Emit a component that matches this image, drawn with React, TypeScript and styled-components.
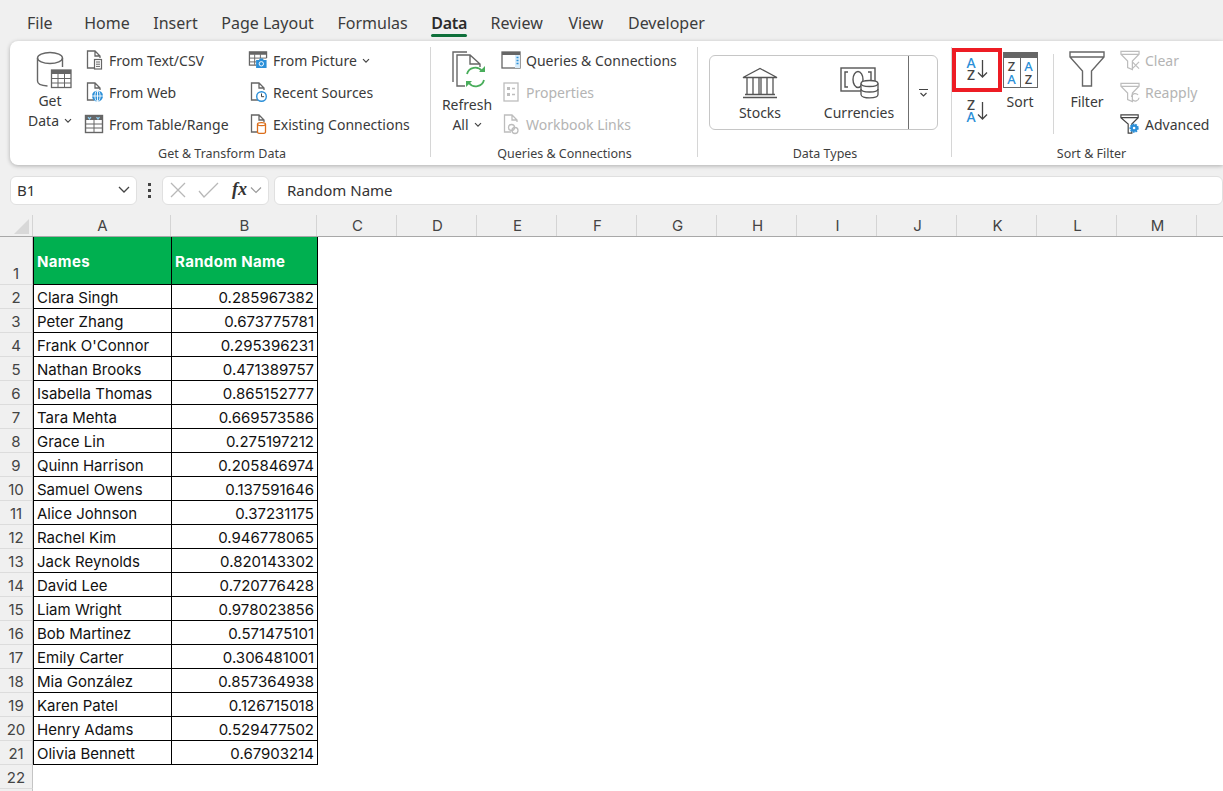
import React from 'react';
import styled, { createGlobalStyle } from 'styled-components';

const GlobalStyle = createGlobalStyle`
    html, body {
        margin: 0;
        padding: 0;
        background: #ffffff;
        overflow: hidden;
    }
    * {
        box-sizing: border-box;
    }
`;

const uiFont = '"Noto Sans", "Open Sans", sans-serif';
const cellFont = 'Inter, "Open Sans", sans-serif';

const GREY = '#666666';
const BLUE = '#2b8fd8';
const OFF = '#bdbdbd';

/* ---------- icons ---------- */

const Chevron = ({ size = 8, color = '#444' }: { size?: number; color?: string }) => (
    <svg width={size} height={size * 0.7} viewBox="0 0 8 5.6" fill="none">
        <path d="M1 1.2 4 4.2 7 1.2" stroke={color} strokeWidth="1.2" />
    </svg>
);

const DocOutline = ({ color = GREY }: { color?: string }) => (
    <path d="M10 19H3.5V2H11L16 7V9M11 2V7H16" stroke={color} strokeWidth="1.3" fill="none" />
);

const TextCsvIcon = () => (
    <svg width="20" height="22" viewBox="0 0 20 22" fill="none">
        <DocOutline />
        <rect x="10.5" y="10.5" width="7" height="9.5" fill="#fff" stroke={GREY} strokeWidth="1.2" />
        <path d="M12 13h4M12 15.2h4M12 17.4h4" stroke={GREY} />
    </svg>
);

const WebIcon = () => (
    <svg width="20" height="22" viewBox="0 0 20 22" fill="none">
        <DocOutline />
        <circle cx="13.5" cy="15" r="5.5" fill={BLUE} />
        <path d="M8 15h11M13.5 9.5v11" stroke="#fff" strokeWidth="0.9" />
        <ellipse cx="13.5" cy="15" rx="2.6" ry="5.5" stroke="#fff" strokeWidth="0.9" />
    </svg>
);

const TableRangeIcon = () => (
    <svg width="20" height="20" viewBox="0 0 20 20" fill="none">
        <rect x="1.5" y="1.5" width="17" height="17" fill="#fff" stroke={GREY} strokeWidth="1.4" />
        <rect x="1.5" y="1.5" width="17" height="4.5" fill={GREY} />
        <path d="M4 3.2 5.5 5 7 3.2M12.5 3.2 14 5 15.5 3.2" fill="none" stroke="#8fd0f5" strokeWidth="1.2" />
        <path d="M1.5 10h17M1.5 14h17M10 6v12.5" stroke={GREY} />
    </svg>
);

const PictureIcon = () => (
    <svg width="21" height="20" viewBox="0 0 21 20" fill="none">
        <path d="M9 15.5H1.5V1.5h18V8" stroke={GREY} strokeWidth="1.3" />
        <rect x="1.5" y="1.5" width="18" height="3" fill={GREY} />
        <path d="M1.5 8h18M1.5 12h7M7 4v11M13 4v4" stroke={GREY} />
        <path d="M8.5 10h3l1-1.5h3l1 1.5h3v8.5h-11z" fill={BLUE} />
        <circle cx="14" cy="14" r="2.3" fill={BLUE} stroke="#fff" strokeWidth="1" />
    </svg>
);

const RecentIcon = () => (
    <svg width="20" height="22" viewBox="0 0 20 22" fill="none">
        <DocOutline />
        <circle cx="13.5" cy="15.5" r="4.8" fill="#fff" stroke={BLUE} strokeWidth="1.4" />
        <path d="M13.5 12.5v3.2h2.6" stroke="#444" strokeWidth="1" />
    </svg>
);

const ExistingIcon = () => (
    <svg width="20" height="22" viewBox="0 0 20 22" fill="none">
        <DocOutline />
        <path d="M9.5 11.2c0-2.2 8-2.2 8 0v8c0 1.6-8 1.6-8 0z" fill="#fff" stroke="#db6e1b" strokeWidth="1.3" />
        <path d="M9.5 11.5c1 1.6 7 1.6 8 0" stroke="#db6e1b" strokeWidth="1.3" />
    </svg>
);

const GetDataIcon = () => (
    <svg width="36" height="38" viewBox="0 0 36 38" fill="none">
        <ellipse cx="14" cy="7" rx="12.5" ry="5.5" fill="#fff" stroke={GREY} strokeWidth="1.4" />
        <path d="M1.5 7v23c0 2.6 4 4.6 10 5" stroke={GREY} strokeWidth="1.4" />
        <path d="M26.5 7v9" stroke={GREY} strokeWidth="1.4" />
        <rect x="15.5" y="19" width="19.5" height="17.5" fill="#fff" stroke={GREY} strokeWidth="1.3" />
        <rect x="15.5" y="19" width="19.5" height="4" fill={GREY} />
        <path d="M15.5 27.5h19.5M15.5 32h19.5M22 23v13.5M28.5 23v13.5" stroke={GREY} />
    </svg>
);

const QueriesIcon = () => (
    <svg width="20" height="18" viewBox="0 0 20 18" fill="none">
        <rect x="1" y="1" width="18" height="16" fill="#fff" stroke={GREY} strokeWidth="1.3" />
        <rect x="1" y="1" width="18" height="3" fill={GREY} />
        <rect x="14" y="4" width="5" height="13" fill="#d8ecfa" />
        <path d="M15.5 6.5h2M15.5 9.5h2M15.5 12.5h2" stroke={BLUE} strokeWidth="1.4" />
    </svg>
);

const PropertiesIcon = () => (
    <svg width="16" height="20" viewBox="0 0 16 20" fill="none">
        <rect x="1" y="1" width="14" height="18" stroke={OFF} strokeWidth="1.3" />
        <rect x="4" y="5" width="3" height="3" fill={OFF} />
        <rect x="4" y="11" width="3" height="3" fill={OFF} />
        <path d="M9 6.5h3M9 12.5h3" stroke={OFF} strokeWidth="1.3" />
    </svg>
);

const WorkbookLinksIcon = () => (
    <svg width="20" height="22" viewBox="0 0 20 22" fill="none">
        <DocOutline color={OFF} />
        <circle cx="10.5" cy="14.5" r="3" stroke={OFF} strokeWidth="1.3" />
        <circle cx="14" cy="17.5" r="3" stroke={OFF} strokeWidth="1.3" />
    </svg>
);

const RefreshIcon = () => (
    <svg width="35" height="39" viewBox="0 0 35 39" fill="none">
        <path d="M1 31V1h14" stroke={GREY} strokeWidth="1.4" />
        <path d="M13 35H5V4h13l10 9v3M18 4v9h10" stroke={GREY} strokeWidth="1.4" />
        <path d="M15 23a8.5 8.5 0 0 1 15-3M32 29a8.5 8.5 0 0 1-15 3" stroke="#49ad5b" strokeWidth="1.8" />
        <path d="M33 15v6h-6zM14 36v-6h6z" fill="#49ad5b" />
    </svg>
);

const StocksIcon = () => (
    <svg width="36" height="32" viewBox="0 0 36 32" fill="none" stroke="#555" strokeWidth="1.3">
        <path d="M1 10.5 18 1.5l17 9zM1 10.5h34" />
        <path d="M5 11v16M11 11v16M17 11v16M19 11v16M25 11v16M31 11v16" />
        <path d="M3 27.5h30M1 30.5h34" />
    </svg>
);

const CurrenciesIcon = () => (
    <svg width="39" height="33" viewBox="0 0 39 33" fill="none">
        <rect x="1" y="1" width="34" height="23" stroke="#555" strokeWidth="1.4" />
        <path d="M8 5H5v15h3M28 5h3v8" stroke="#555" strokeWidth="1.4" />
        <ellipse cx="18" cy="12.5" rx="5" ry="8" stroke="#555" strokeWidth="1.4" />
        <path d="M21 16.5c0-4 17-4 17 0v11c0 4.5-17 4.5-17 0z" fill="#fff" stroke="#555" strokeWidth="1.3" />
        <path d="M21 16.5c0 4 17 4 17 0M21 22c0 4 17 4 17 0" stroke="#555" strokeWidth="1.3" />
    </svg>
);

const MoreIcon = () => (
    <svg width="11" height="10" viewBox="0 0 11 10" fill="none" stroke="#444">
        <path d="M1 1.5h9" />
        <path d="M2.5 5 5.5 8 8.5 5" strokeWidth="1.2" />
    </svg>
);

/* stacked letters: the first line takes the other colour */
const Letters = styled.span<{ $blueFirst?: boolean; $size: number; $lh: number }>`
    display: block;
    text-align: center;
    font: 500 ${(p) => p.$size}px/${(p) => p.$lh}px ${uiFont};
    color: ${(p) => (p.$blueFirst ? '#444444' : BLUE)};

    &::first-line {
        color: ${(p) => (p.$blueFirst ? BLUE : '#444444')};
    }
`;

const SortGlyph = styled.span`
    display: flex;
    align-items: center;
    gap: 1px;
`;

const DownArrow = () => (
    <svg width="11" height="20" viewBox="0 0 11 20" fill="none" stroke="#444" strokeWidth="1.3">
        <path d="M5.5 1v17M1 13.5 5.5 18 10 13.5" />
    </svg>
);

const SortBox = styled.div`
    width: 35px;
    height: 36px;
    display: flex;
    background: #ffffff;
    border: 1.5px solid ${GREY};
    border-top-width: 6px;
`;

const SortPane = styled.div<{ $line?: boolean }>`
    flex: 1;
    padding-top: 2px;
    border-left: ${(p) => (p.$line ? `1.5px solid ${GREY}` : 'none')};
`;

const FilterIcon = () => (
    <svg width="36" height="36" viewBox="0 0 36 36" fill="none">
        <path d="M1 1h34v5L22.5 20v15h-9V20L1 6zM1 6h34" fill="#fff" stroke={GREY} strokeWidth="1.4" />
    </svg>
);

const FunnelSmall = ({ color }: { color: string }) => (
    <path d="M1 1h19v3l-7 7v9l-5-2v-7L1 4zM1 4h19" fill="#fff" stroke={color} strokeWidth="1.3" />
);

const ClearIcon = () => (
    <svg width="21" height="21" viewBox="0 0 21 21" fill="none">
        <FunnelSmall color={OFF} />
        <path d="M13 12l7 7M20 12l-7 7" stroke={OFF} strokeWidth="1.3" />
    </svg>
);

const ReapplyIcon = () => (
    <svg width="21" height="21" viewBox="0 0 21 21" fill="none">
        <FunnelSmall color={OFF} />
        <path d="M12 15a4 4 0 0 1 7-2M20 16a4 4 0 0 1-7 2" stroke={OFF} strokeWidth="1.3" />
    </svg>
);

const AdvancedIcon = () => (
    <svg width="22" height="22" viewBox="0 0 22 22" fill="none">
        <path d="M1 1h19v3l-7 7v10h-4V11L1 4zM1 4h19" fill="#fff" stroke="#444" strokeWidth="1.3" />
        <circle cx="15.5" cy="15.5" r="4" fill={BLUE} stroke={BLUE} strokeDasharray="1.8 1" strokeWidth="2.2" />
        <circle cx="15.5" cy="15.5" r="1.4" fill="#fff" />
    </svg>
);

/* ---------- ribbon ---------- */

const Page = styled.div`
    width: 1223px;
    height: 791px;
    overflow: hidden;
    background: #ffffff;
`;

const Chrome = styled.div`
    background: #f0f0f0;
    height: 215px;
    font-family: ${uiFont};
`;

const TabBar = styled.nav`
    height: 41px;
    display: flex;
    align-items: flex-start;
    padding: 12px 0 0 27px;
    gap: 23.6px;
`;

const Tab = styled.span<{ $active?: boolean; $extra?: number }>`
    position: relative;
    font-size: 16px;
    line-height: 22px;
    font-weight: ${(p) => (p.$active ? 600 : 400)};
    letter-spacing: ${(p) => (p.$active ? '-0.3px' : '0')};
    color: ${(p) => (p.$active ? '#2b2b2b' : '#3c3c3c')};
    margin-right: ${(p) => p.$extra ?? 0}px;

    &::after {
        content: '';
        display: ${(p) => (p.$active ? 'block' : 'none')};
        position: absolute;
        left: 0;
        right: 0;
        top: 22px;
        height: 3px;
        border-radius: 2px;
        background: #0f703b;
    }
`;

const Ribbon = styled.section`
    margin-left: 10px;
    height: 124px;
    display: flex;
    background: #ffffff;
    border-radius: 8px 0 0 8px;
    box-shadow: 0 1px 4px rgba(0, 0, 0, 0.28);
    font-size: 14px;
    color: #3a3a3a;
`;

const Group = styled.div<{ $w?: number; $line?: boolean }>`
    position: relative;
    flex: ${(p) => (p.$w ? `0 0 ${p.$w}px` : '1')};
    display: flex;
    flex-direction: column;

    &::after {
        content: '';
        display: ${(p) => (p.$line ? 'block' : 'none')};
        position: absolute;
        right: 0;
        top: 6px;
        height: 110px;
        width: 1px;
        background: #d6d6d6;
    }
`;

const GroupBody = styled.div<{ $left: number }>`
    height: 99px;
    padding: 3px 0 0 ${(p) => p.$left}px;
    display: flex;
`;

const GroupLabel = styled.div<{ $shift?: number }>`
    height: 25px;
    line-height: 27px;
    font-size: 12.5px;
    text-align: center;
    color: #3f3f3f;
    padding-left: ${(p) => p.$shift ?? 0}px;
`;

const LargeButton = styled.div<{ $w: number; $mr: number }>`
    width: ${(p) => p.$w}px;
    margin-right: ${(p) => p.$mr}px;
    display: flex;
    flex-direction: column;
    align-items: center;
    line-height: 20px;
    text-align: center;
    white-space: nowrap;
`;

const LargeIconSlot = styled.div<{ $h: number; $top?: number; $nudge?: number }>`
    height: ${(p) => p.$h}px;
    padding-top: ${(p) => p.$top ?? 7}px;
    padding-left: ${(p) => p.$nudge ?? 0}px;
`;

const SmallColumn = styled.div<{ $w: number }>`
    width: ${(p) => p.$w}px;
    display: flex;
    flex-direction: column;
`;

const SmallButton = styled.div<{ $off?: boolean }>`
    height: 32px;
    display: flex;
    align-items: center;
    gap: 5px;
    white-space: nowrap;
    color: ${(p) => (p.$off ? '#b4b4b4' : 'inherit')};
`;

const IconSlot = styled.span`
    width: 20px;
    height: 22px;
    display: flex;
    align-items: center;
    justify-content: center;
    flex: none;
`;

const InlineChevron = styled.span`
    display: inline-block;
    margin-left: 5px;
    transform: translateY(-2px);
`;

const Gallery = styled.div`
    margin-top: 11px;
    width: 229px;
    height: 75px;
    display: flex;
    border: 1px solid #c6c6c6;
    border-radius: 6px;
`;

const GalleryItem = styled.div<{ $w: number }>`
    width: ${(p) => p.$w}px;
    display: flex;
    flex-direction: column;
    align-items: center;
    padding-top: 11px;
    line-height: 20px;
`;

const GalleryIcon = styled.div`
    height: 36px;
`;

const GalleryMore = styled.div`
    flex: 1;
    display: flex;
    align-items: center;
    justify-content: center;
    border-left: 1px solid #6f6f6f;
`;

const SortColumn = styled.div`
    width: 50px;
    display: flex;
    flex-direction: column;
    align-items: center;
`;

const SortSlot = styled.div<{ $top: number }>`
    height: 44px;
    display: flex;
    align-items: center;
    justify-content: center;
    padding-top: ${(p) => p.$top}px;
`;

const RedFrame = styled.div`
    position: absolute;
    left: 0;
    top: 7px;
    width: 50px;
    height: 44px;
    border: 4px solid #ed1c24;
`;

const InnerRule = styled.div`
    width: 1px;
    height: 80px;
    margin: 10px 15px 0 15px;
    background: #d6d6d6;
`;

/* ---------- formula bar ---------- */

const FormulaRow = styled.div`
    height: 50px;
    padding: 11px 0 10px 10px;
    display: flex;
    align-items: stretch;
`;

const FieldBox = styled.div<{ $w?: number; $ml?: number }>`
    ${(p) => (p.$w ? `width: ${p.$w}px;` : 'flex: 1;')}
    margin-left: ${(p) => p.$ml ?? 0}px;
    display: flex;
    align-items: center;
    padding-bottom: 2px;
    background: #ffffff;
    border: 1px solid #e0e0e0;
    border-radius: 6px;
    font-size: 15px;
    color: #333333;
`;

const FieldText = styled.span<{ $pad: number }>`
    flex: 1;
    padding-left: ${(p) => p.$pad}px;
`;

const Dots = styled.div`
    width: 25px;
    display: flex;
    flex-direction: column;
    align-items: center;
    justify-content: center;
    gap: 3px;
`;

const Dot = styled.i`
    width: 3px;
    height: 3px;
    background: #444444;
    display: block;
`;

const FxGlyph = styled.span`
    font: italic 700 18px 'Liberation Serif', serif;
    color: #333333;
    margin: 0 3px 0 12px;
`;

const FxMarks = styled.svg`
    margin-left: 7px;
`;

const ChevronEnd = styled.svg`
    margin-right: 5px;
`;

/* ---------- sheet ---------- */

const Sheet = styled.div`
    font-family: ${cellFont};
`;

const HeadRow = styled.div`
    height: 22px;
    display: flex;
    background: #f0f0f0;
    border-bottom: 1px solid #a8a8a8;
`;

const Corner = styled.div`
    width: 33px;
    flex: none;
    position: relative;
    border-right: 1px solid #d4d4d4;

    &::after {
        content: '';
        position: absolute;
        right: 3px;
        bottom: 2px;
        border-style: solid;
        border-width: 0 0 15px 15px;
        border-color: transparent transparent #d8d8d8 transparent;
    }
`;

const ColHead = styled.div<{ $w: number }>`
    width: ${(p) => p.$w}px;
    flex: none;
    padding-left: 2px;
    text-align: center;
    font-size: 15px;
    line-height: 21px;
    color: #444444;
    border-right: 1px solid #d4d4d4;
`;

const Row = styled.div<{ $h: number }>`
    height: ${(p) => p.$h}px;
    display: flex;
`;

const RowHead = styled.div`
    width: 33px;
    flex: none;
    display: flex;
    align-items: flex-end;
    justify-content: center;
    background: #f0f0f0;
    border-bottom: 1px solid #dcdcdc;
    border-right: 1px solid #c4c4c4;
    font-size: 15px;
    line-height: 21px;
    color: #444444;
`;

const Cell = styled.div<{ $w: number; $head?: boolean; $num?: boolean; $last?: boolean }>`
    width: ${(p) => p.$w}px;
    flex: none;
    display: flex;
    align-items: center;
    justify-content: ${(p) => (p.$num ? 'flex-end' : 'flex-start')};
    padding: ${(p) => (p.$num ? '1px 3px 0 0' : '1px 0 0 3px')};
    border-left: 1px solid #000000;
    border-bottom: 1px solid #000000;
    border-right: ${(p) => (p.$last ? '1px solid #000000' : 'none')};
    background: ${(p) => (p.$head ? '#00b050' : 'transparent')};
    color: ${(p) => (p.$head ? '#ffffff' : '#111111')};
    font-weight: ${(p) => (p.$head ? 700 : 400)};
    letter-spacing: ${(p) => (p.$head ? '0.35px' : '0')};
    font-size: 15px;
    white-space: nowrap;
`;

const columns = [
    { id: 'A', w: 138 },
    { id: 'B', w: 146 },
    { id: 'C', w: 80 },
    { id: 'D', w: 80 },
    { id: 'E', w: 80 },
    { id: 'F', w: 80 },
    { id: 'G', w: 80 },
    { id: 'H', w: 80 },
    { id: 'I', w: 80 },
    { id: 'J', w: 80 },
    { id: 'K', w: 80 },
    { id: 'L', w: 80 },
    { id: 'M', w: 80 },
    { id: '', w: 60 },
];

const rows: [string, string][] = [
    ['Clara Singh', '0.285967382'],
    ['Peter Zhang', '0.673775781'],
    ["Frank O'Connor", '0.295396231'],
    ['Nathan Brooks', '0.471389757'],
    ['Isabella Thomas', '0.865152777'],
    ['Tara Mehta', '0.669573586'],
    ['Grace Lin', '0.275197212'],
    ['Quinn Harrison', '0.205846974'],
    ['Samuel Owens', '0.137591646'],
    ['Alice Johnson', '0.37231175'],
    ['Rachel Kim', '0.946778065'],
    ['Jack Reynolds', '0.820143302'],
    ['David Lee', '0.720776428'],
    ['Liam Wright', '0.978023856'],
    ['Bob Martinez', '0.571475101'],
    ['Emily Carter', '0.306481001'],
    ['Mia González', '0.857364938'],
    ['Karen Patel', '0.126715018'],
    ['Henry Adams', '0.529477502'],
    ['Olivia Bennett', '0.67903214'],
];

const tabs = [
    { label: 'File', extra: 8 },
    { label: 'Home' },
    { label: 'Insert' },
    { label: 'Page Layout' },
    { label: 'Formulas' },
    { label: 'Data', active: true },
    { label: 'Review', extra: 2 },
    { label: 'View', extra: 1 },
    { label: 'Developer' },
];

const App = () => {
    return (
        <Page>
            <GlobalStyle />
            <Chrome>
                <TabBar>
                    {tabs.map((t) => (
                        <Tab key={t.label} $active={t.active} $extra={t.extra}>
                            {t.label}
                        </Tab>
                    ))}
                </TabBar>

                <Ribbon>
                    {/* get & transform */}
                    <Group $w={421} $line>
                        <GroupBody $left={17}>
                            <LargeButton $w={46} $mr={11}>
                                <LargeIconSlot $h={47} $nudge={8}>
                                    <GetDataIcon />
                                </LargeIconSlot>
                                <span>Get</span>
                                <span>
                                    Data
                                    <InlineChevron>
                                        <Chevron />
                                    </InlineChevron>
                                </span>
                            </LargeButton>
                            <SmallColumn $w={164}>
                                <SmallButton>
                                    <IconSlot><TextCsvIcon /></IconSlot>From Text/CSV
                                </SmallButton>
                                <SmallButton>
                                    <IconSlot><WebIcon /></IconSlot>From Web
                                </SmallButton>
                                <SmallButton>
                                    <IconSlot><TableRangeIcon /></IconSlot>From Table/Range
                                </SmallButton>
                            </SmallColumn>
                            <SmallColumn $w={170}>
                                <SmallButton>
                                    <IconSlot><PictureIcon /></IconSlot>
                                    <span>
                                        From Picture
                                        <InlineChevron>
                                            <Chevron />
                                        </InlineChevron>
                                    </span>
                                </SmallButton>
                                <SmallButton>
                                    <IconSlot><RecentIcon /></IconSlot>Recent Sources
                                </SmallButton>
                                <SmallButton>
                                    <IconSlot><ExistingIcon /></IconSlot>Existing Connections
                                </SmallButton>
                            </SmallColumn>
                        </GroupBody>
                        <GroupLabel $shift={3}>Get &amp; Transform Data</GroupLabel>
                    </Group>

                    {/* queries */}
                    <Group $w={267} $line>
                        <GroupBody $left={10}>
                            <LargeButton $w={52} $mr={8}>
                                <LargeIconSlot $h={51} $nudge={5}>
                                    <RefreshIcon />
                                </LargeIconSlot>
                                <span>Refresh</span>
                                <span>
                                    All
                                    <InlineChevron>
                                        <Chevron />
                                    </InlineChevron>
                                </span>
                            </LargeButton>
                            <SmallColumn $w={190}>
                                <SmallButton>
                                    <IconSlot><QueriesIcon /></IconSlot>Queries &amp; Connections
                                </SmallButton>
                                <SmallButton $off>
                                    <IconSlot><PropertiesIcon /></IconSlot>Properties
                                </SmallButton>
                                <SmallButton $off>
                                    <IconSlot><WorkbookLinksIcon /></IconSlot>Workbook Links
                                </SmallButton>
                            </SmallColumn>
                        </GroupBody>
                        <GroupLabel>Queries &amp; Connections</GroupLabel>
                    </Group>

                    {/* data types */}
                    <Group $w={254} $line>
                        <GroupBody $left={11}>
                            <Gallery>
                                <GalleryItem $w={100}>
                                    <GalleryIcon><StocksIcon /></GalleryIcon>
                                    Stocks
                                </GalleryItem>
                                <GalleryItem $w={98}>
                                    <GalleryIcon><CurrenciesIcon /></GalleryIcon>
                                    Currencies
                                </GalleryItem>
                                <GalleryMore>
                                    <MoreIcon />
                                </GalleryMore>
                            </Gallery>
                        </GroupBody>
                        <GroupLabel>Data Types</GroupLabel>
                    </Group>

                    {/* sort & filter */}
                    <Group>
                        <GroupBody $left={0}>
                            <SortColumn>
                                <SortSlot $top={6}>
                                    <SortGlyph>
                                        <Letters $blueFirst $size={14} $lh={12}>A<br />Z</Letters>
                                        <DownArrow />
                                    </SortGlyph>
                                </SortSlot>
                                <SortSlot $top={2}>
                                    <SortGlyph>
                                        <Letters $size={14} $lh={12}>Z<br />A</Letters>
                                        <DownArrow />
                                    </SortGlyph>
                                </SortSlot>
                            </SortColumn>
                            <LargeButton $w={36} $mr={0}>
                                <LargeIconSlot $h={48} $top={8}>
                                    <SortBox>
                                        <SortPane>
                                            <Letters $size={13} $lh={13}>Z<br />A</Letters>
                                        </SortPane>
                                        <SortPane $line>
                                            <Letters $blueFirst $size={13} $lh={13}>A<br />Z</Letters>
                                        </SortPane>
                                    </SortBox>
                                </LargeIconSlot>
                                <span>Sort</span>
                            </LargeButton>
                            <InnerRule />
                            <LargeButton $w={36} $mr={15}>
                                <LargeIconSlot $h={48}>
                                    <FilterIcon />
                                </LargeIconSlot>
                                <span>Filter</span>
                            </LargeButton>
                            <SmallColumn $w={100}>
                                <SmallButton $off>
                                    <IconSlot><ClearIcon /></IconSlot>Clear
                                </SmallButton>
                                <SmallButton $off>
                                    <IconSlot><ReapplyIcon /></IconSlot>Reapply
                                </SmallButton>
                                <SmallButton>
                                    <IconSlot><AdvancedIcon /></IconSlot>Advanced
                                </SmallButton>
                            </SmallColumn>
                        </GroupBody>
                        <GroupLabel $shift={8}>Sort &amp; Filter</GroupLabel>
                        <RedFrame />
                    </Group>
                </Ribbon>

                <FormulaRow>
                    <FieldBox $w={127}>
                        <FieldText $pad={6}>B1</FieldText>
                        <ChevronEnd width="14" height="9" viewBox="0 0 14 9" fill="none">
                            <path d="M2 2 7 7 12 2" stroke="#444" strokeWidth="1.3" />
                        </ChevronEnd>
                    </FieldBox>
                    <Dots>
                        <Dot />
                        <Dot />
                        <Dot />
                    </Dots>
                    <FieldBox $w={107}>
                        <FxMarks width="50" height="16" viewBox="0 0 50 16" fill="none" stroke="#b8b8b8" strokeWidth="1.3">
                            <path d="M1 1l14 14M15 1 1 15M29 9l5 6L48 1" />
                        </FxMarks>
                        <FxGlyph>fx</FxGlyph>
                        <svg width="12" height="8" viewBox="0 0 12 8" fill="none">
                            <path d="M1 1.5 6 6.5 11 1.5" stroke="#9a9a9a" strokeWidth="1.2" />
                        </svg>
                    </FieldBox>
                    <FieldBox $ml={5}>
                        <FieldText $pad={12}>Random Name</FieldText>
                    </FieldBox>
                </FormulaRow>
            </Chrome>

            <Sheet>
                <HeadRow>
                    <Corner />
                    {columns.map((c) => (
                        <ColHead key={c.id} $w={c.w}>
                            {c.id}
                        </ColHead>
                    ))}
                </HeadRow>
                <Row $h={48}>
                    <RowHead>1</RowHead>
                    <Cell $w={138} $head>Names</Cell>
                    <Cell $w={147} $head $last>Random Name</Cell>
                </Row>
                {rows.map(([name, value], i) => (
                    <Row key={name} $h={24}>
                        <RowHead>{i + 2}</RowHead>
                        <Cell $w={138}>{name}</Cell>
                        <Cell $w={147} $num $last>{value}</Cell>
                    </Row>
                ))}
                <Row $h={24}>
                    <RowHead>22</RowHead>
                </Row>
                <Row $h={24}>
                    <RowHead />
                </Row>
            </Sheet>
        </Page>
    );
};

export default App;
